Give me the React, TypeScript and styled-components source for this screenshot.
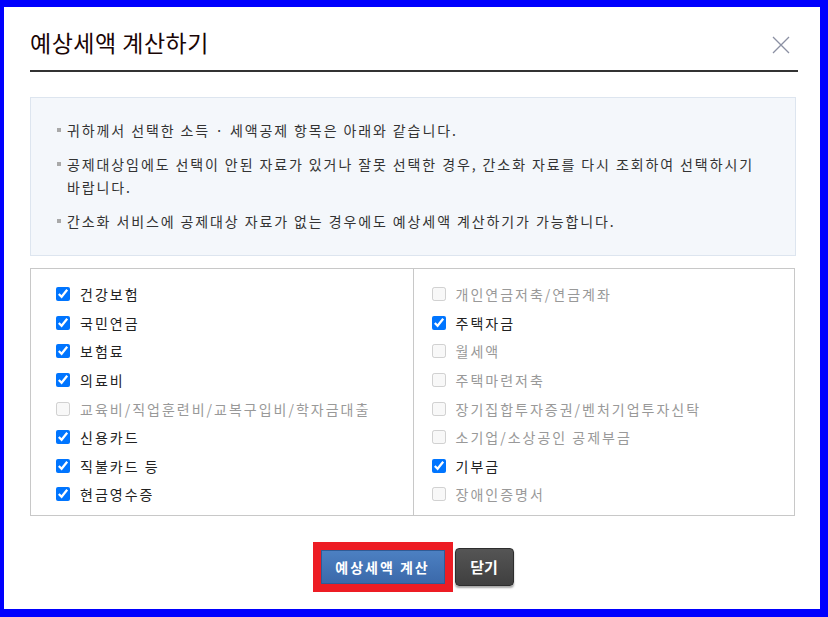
import React from "react";
import styled, { createGlobalStyle } from "styled-components";

const GlobalStyle = createGlobalStyle`
  html, body {
    margin: 0;
    padding: 0;
    background: #0000fe;
  }
  body {
    font-family: "Noto Sans CJK KR", "Noto Sans", sans-serif;
    color: #222;
  }
`;

const Screen = styled.div`
  width: 828px;
  height: 617px;
  box-sizing: border-box;
  padding: 7px 8px 8px 4px;
`;

const Dialog = styled.div`
  height: 100%;
  background: #fff;
  box-sizing: border-box;
  padding: 0 24px 0 26px;
  display: flex;
  flex-direction: column;
`;

const Header = styled.div`
  display: flex;
  align-items: center;
  justify-content: space-between;
  margin-right: -2px;
  padding: 20px 0 13px;
  border-bottom: 2px solid #333;
`;

const Title = styled.h1`
  margin: 0;
  font-size: 23px;
  font-weight: 400;
  line-height: 30px;
  letter-spacing: 0.5px;
  color: #1a0505;
`;

const CloseButton = styled.button`
  width: 20px;
  height: 20px;
  padding: 0;
  margin: 6px 7px 0 0;
  border: 0;
  background: transparent;
  display: flex;
  align-items: center;
  justify-content: center;
  cursor: pointer;
`;

const InfoBox = styled.ul`
  list-style: none;
  margin: 25px 0 0;
  padding: 21px 6px 22px 26px;
  background: #f4f7fb;
  border: 1px solid #dde5ef;
`;

const InfoItem = styled.li`
  position: relative;
  padding-left: 10px;
  font-size: 14px;
  line-height: 23px;
  letter-spacing: 1.9px;
  color: #333;

  & + & {
    margin-top: 11px;
  }

  &::before {
    content: "";
    position: absolute;
    left: 0;
    top: 9px;
    width: 4px;
    height: 4px;
    background: #a9a9a9;
  }
`;

const CheckGrid = styled.div`
  margin-top: 12px;
  display: grid;
  grid-template-columns: 1fr 1fr;
  border: 1px solid #c8c8c8;
  width: 763px;
`;

const Column = styled.ul<{ $pad: number; $divider?: boolean }>`
  list-style: none;
  margin: 0;
  padding: 11px 0 6px ${(p) => p.$pad}px;
  border-left: ${(p) => (p.$divider ? "1px solid #c8c8c8" : "0")};
`;

const CheckRow = styled.li`
  height: 28.6px;
  display: flex;
  align-items: center;
`;

const CheckLabel = styled.label<{ $disabled: boolean }>`
  display: flex;
  align-items: center;
  gap: 10px;
  font-size: 14px;
  letter-spacing: 2px;
  color: ${(p) => (p.$disabled ? "#999" : "#222")};
`;

const Box = styled.input`
  width: 14px;
  height: 14px;
  margin: 0;
  accent-color: #0075ff;
`;

const Footer = styled.div`
  margin-top: 26px;
  display: flex;
  justify-content: center;
  align-items: center;
  gap: 2px;
`;

const Highlight = styled.div`
  border: 8px solid #ed1c24;
  display: flex;
`;

const PrimaryButton = styled.button`
  width: 124px;
  height: 34px;
  border: 1px solid #2f5b96;
  background: linear-gradient(#4c80c2, #3b69aa);
  color: #fff;
  font-family: "Noto Sans CJK KR", sans-serif;
  font-size: 14px;
  font-weight: 700;
  letter-spacing: 2px;
  padding: 0;
  cursor: pointer;
`;

const DarkButton = styled.button`
  width: 59px;
  height: 38px;
  border: 1px solid #2d2d2d;
  border-radius: 4px;
  background: linear-gradient(#555, #3f3f3f);
  box-shadow: 0 2px 2px rgba(0, 0, 0, 0.35);
  color: #fff;
  font-family: "Noto Sans CJK KR", sans-serif;
  font-size: 15px;
  font-weight: 700;
  padding: 0;
  cursor: pointer;
`;

type Item = { label: string; checked: boolean };

const left: Item[] = [
  { label: "건강보험", checked: true },
  { label: "국민연금", checked: true },
  { label: "보험료", checked: true },
  { label: "의료비", checked: true },
  { label: "교육비/직업훈련비/교복구입비/학자금대출", checked: false },
  { label: "신용카드", checked: true },
  { label: "직불카드 등", checked: true },
  { label: "현금영수증", checked: true },
];

const right: Item[] = [
  { label: "개인연금저축/연금계좌", checked: false },
  { label: "주택자금", checked: true },
  { label: "월세액", checked: false },
  { label: "주택마련저축", checked: false },
  { label: "장기집합투자증권/벤처기업투자신탁", checked: false },
  { label: "소기업/소상공인 공제부금", checked: false },
  { label: "기부금", checked: true },
  { label: "장애인증명서", checked: false },
];

const renderItems = (items: Item[]) =>
  items.map((it) => (
    <CheckRow key={it.label}>
      <CheckLabel $disabled={!it.checked}>
        <Box type="checkbox" defaultChecked={it.checked} disabled={!it.checked} />
        {it.label}
      </CheckLabel>
    </CheckRow>
  ));

const App = () => {
  return (
    <>
      <GlobalStyle />
      <Screen>
        <Dialog>
          <Header>
            <Title>예상세액 계산하기</Title>
            <CloseButton aria-label="닫기">
              <svg width="18" height="18" viewBox="0 0 18 18">
                <path d="M1 1 L17 17 M17 1 L1 17" stroke="#8b90a3" strokeWidth="1.3" />
              </svg>
            </CloseButton>
          </Header>

          <InfoBox>
            <InfoItem>귀하께서 선택한 소득 · 세액공제 항목은 아래와 같습니다.</InfoItem>
            <InfoItem>
              공제대상임에도 선택이 안된 자료가 있거나 잘못 선택한 경우, 간소화 자료를 다시 조회하여 선택하시기
              <br />
              바랍니다.
            </InfoItem>
            <InfoItem>간소화 서비스에 공제대상 자료가 없는 경우에도 예상세액 계산하기가 가능합니다.</InfoItem>
          </InfoBox>

          <CheckGrid>
            <Column $pad={25}>{renderItems(left)}</Column>
            <Column $pad={18} $divider>
              {renderItems(right)}
            </Column>
          </CheckGrid>

          <Footer>
            <Highlight>
              <PrimaryButton>예상세액 계산</PrimaryButton>
            </Highlight>
            <DarkButton>닫기</DarkButton>
          </Footer>
        </Dialog>
      </Screen>
    </>
  );
};

export default App;
